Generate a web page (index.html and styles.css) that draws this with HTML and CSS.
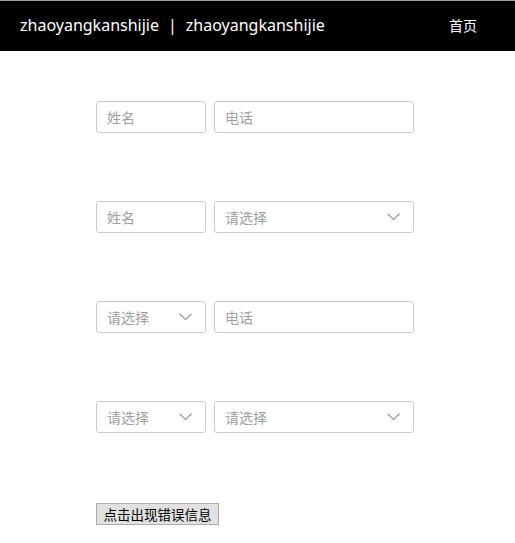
FILE: index.html
```html
<!DOCTYPE html>
<html lang="zh">
<head>
<meta charset="utf-8">
<title>form</title>
<link rel="stylesheet" href="styles.css">
</head>
<body>
<header class="topbar">
  <div class="brand">zhaoyangkanshijie<span class="sep">|</span>zhaoyangkanshijie</div>
  <nav class="nav"><a class="nav-link" href="#">首页</a></nav>
</header>
<main class="content">
  <div class="row">
    <div class="field small"><span class="ph">姓名</span></div>
    <div class="field wide"><span class="ph">电话</span></div>
  </div>
  <div class="row">
    <div class="field small"><span class="ph">姓名</span></div>
    <div class="field wide select"><span class="ph">请选择</span>
      <svg class="chev" width="13" height="8" viewBox="0 0 13 8"><path d="M0.5 0.8 L6.5 6.5 L12.5 0.8" fill="none" stroke="#999" stroke-width="1.2"/></svg>
    </div>
  </div>
  <div class="row">
    <div class="field small select"><span class="ph">请选择</span>
      <svg class="chev" width="13" height="8" viewBox="0 0 13 8"><path d="M0.5 0.8 L6.5 6.5 L12.5 0.8" fill="none" stroke="#999" stroke-width="1.2"/></svg>
    </div>
    <div class="field wide"><span class="ph">电话</span></div>
  </div>
  <div class="row">
    <div class="field small select"><span class="ph">请选择</span>
      <svg class="chev" width="13" height="8" viewBox="0 0 13 8"><path d="M0.5 0.8 L6.5 6.5 L12.5 0.8" fill="none" stroke="#999" stroke-width="1.2"/></svg>
    </div>
    <div class="field wide select"><span class="ph">请选择</span>
      <svg class="chev" width="13" height="8" viewBox="0 0 13 8"><path d="M0.5 0.8 L6.5 6.5 L12.5 0.8" fill="none" stroke="#999" stroke-width="1.2"/></svg>
    </div>
  </div>
  <button class="btn" type="button">点击出现错误信息</button>
</main>
</body>
</html>
```
FILE: styles.css
```css
html, body {
  margin: 0;
  padding: 0;
  background: #fff;
}
body {
  font-family: "Noto Sans", "Noto Sans CJK SC", sans-serif;
  border-top: 1px solid #a0a0a0;
}
.topbar {
  height: 50px;
  background: #000;
  color: #fff;
  display: flex;
  align-items: center;
  justify-content: space-between;
  padding: 0 38px 2px 20px;
  box-sizing: border-box;
}
.brand {
  font-size: 16px;
}
.sep {
  margin: 0 9px;
}
.nav-link {
  color: #fff;
  text-decoration: none;
  font-family: "Noto Sans CJK SC", sans-serif;
  font-size: 14px;
}
.content {
  padding: 50px 0 0 96px;
  display: flex;
  flex-direction: column;
  align-items: flex-start;
}
.row {
  display: flex;
  gap: 8px;
  margin-bottom: 68px;
}
.field {
  box-sizing: border-box;
  height: 32px;
  border: 1px solid #ccc;
  border-radius: 3px;
  display: flex;
  align-items: center;
  justify-content: space-between;
  padding: 0 13px 0 10px;
}
.field.small { width: 110px; }
.field.wide { width: 200px; }
.ph {
  font-family: "Noto Sans CJK SC", sans-serif;
  font-size: 14px;
  color: #a0a0a0;
}
.chev { display: block; }
.btn {
  margin-top: 2px;
  height: 22px;
  padding: 0 6.5px;
  font-family: "Noto Sans CJK SC", sans-serif;
  font-size: 13.5px;
  color: #000;
  background: #e1e1e1;
  border: 1px solid #adadad;
  border-radius: 0;
  line-height: 18px;
}
```
